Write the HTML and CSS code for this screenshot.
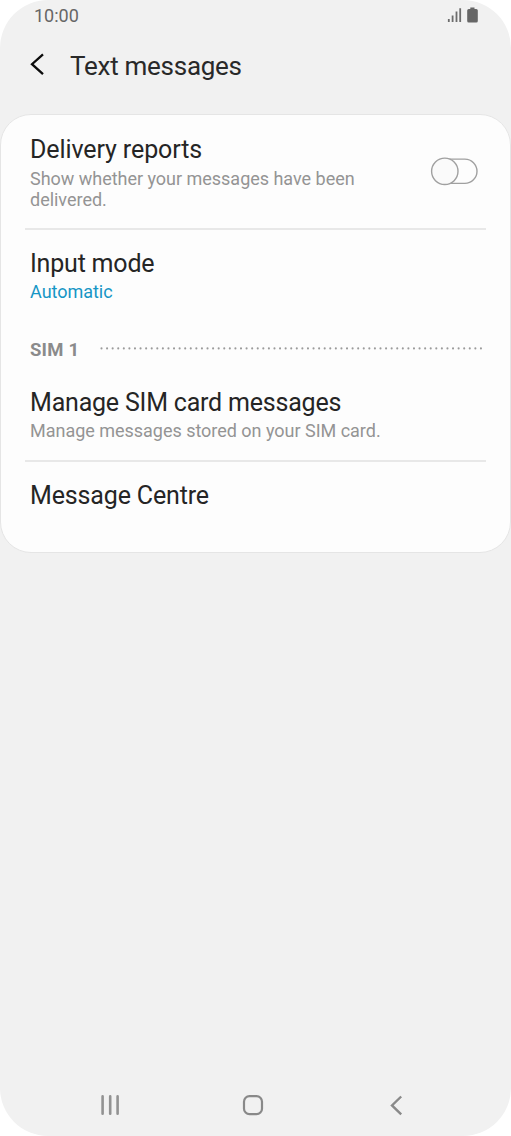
FILE: index.html
```html
<!DOCTYPE html>
<html lang="en">
<head>
<meta charset="utf-8">
<title>Text messages</title>
<link rel="stylesheet" href="styles.css">
</head>
<body>
<div class="screen">
  <div class="status">
    <span class="clock">10:00</span>
    <svg class="indicators" width="32" height="18" viewBox="0 0 32 18">
      <path d="M1.800 15V12M5.600 15V8.400M9.500 15V4.500M13.200 15V1.200" fill="none" stroke="#6c6c6c" stroke-width="1.800"/>
      <path d="M23.300 .4h4.200v1.500h1.800q1.500 0 1.500 1.500v10.700q0 1.500-1.500 1.500h-7.600q-1.500 0-1.500-1.500V3.400q0-1.500 1.500-1.500h1.600z" fill="#666"/>
    </svg>
  </div>
  <header class="header">
    <svg class="back" width="16" height="24" viewBox="0 0 16 24"><path d="M14 2.300 3 12.200l11 10" fill="none" stroke="#0c0c0c" stroke-width="2.300"/></svg>
    <h1 class="title">Text messages</h1>
  </header>
  <main class="card">
    <section class="row row-reports">
      <div class="copy">
        <h2 class="name name-reports">Delivery reports</h2>
        <p class="note">Show whether your messages have been<br>delivered.</p>
      </div>
      <svg class="toggle" width="48" height="30" viewBox="0 0 48 30">
        <rect x="8" y="3.100" width="39" height="24.300" rx="12.150" fill="#fdfdfd" stroke="#a0a0a0" stroke-width="1.400"/>
        <circle cx="14.800" cy="15.300" r="13.200" fill="#fafafa" stroke="#a0a0a0" stroke-width="1.400"/>
      </svg>
    </section>
    <section class="row row-input">
      <h2 class="name name-input">Input mode</h2>
      <p class="note note-active">Automatic</p>
    </section>
    <div class="group">
      <span class="group-label">SIM 1</span>
      <svg class="dots" width="384" height="4" viewBox="0 0 384 4"><path d="M1.500 2.400H383" stroke="#9b9b9b" stroke-width="2.100" stroke-linecap="round" stroke-dasharray="0 5.580"/></svg>
    </div>
    <section class="row row-sim">
      <h2 class="name name-sim">Manage SIM card messages</h2>
      <p class="note note-sim">Manage messages stored on your SIM card.</p>
    </section>
    <section class="row row-centre">
      <h2 class="name name-centre">Message Centre</h2>
    </section>
  </main>
  <nav class="nav">
    <svg width="22" height="22" viewBox="0 0 22 22"><path d="M3.600 2.400V19.800M11.200 2.400V19.800M18.600 2.400V19.800" stroke="#929292" stroke-width="2.600" stroke-linecap="round"/></svg>
    <svg width="22" height="22" viewBox="0 0 22 22"><rect x="2" y="2.200" width="18" height="18" rx="5.500" fill="none" stroke="#898989" stroke-width="2.200"/></svg>
    <svg width="22" height="22" viewBox="0 0 22 22"><path d="M16.200 2.500 7 11.400l9.200 8.900" fill="none" stroke="#8a8a8a" stroke-width="2.400"/></svg>
  </nav>
</div>
</body>
</html>
```
FILE: styles.css
```css
* { box-sizing: border-box; }
body {
  margin: 0;
  background: #fff;
  font-family: Roboto, sans-serif;
}
h1, h2, p { margin: 0; font-weight: 400; white-space: nowrap; }
svg { display: block; flex: none; }
.screen {
  display: flex;
  flex-direction: column;
  height: 1136px;
  background: #f1f1f1;
  border-radius: 48px;
  overflow: hidden;
}
.status {
  display: flex;
  justify-content: space-between;
  align-items: flex-start;
  height: 32px;
  padding: 5px 32px 0 34px;
}
.indicators { margin-top: 2px; }
.clock { font-size: 18px; line-height: 22px; color: #666; }
.header {
  display: flex;
  align-items: flex-start;
  height: 82px;
  padding: 18px 0 0 29px;
}
.back { margin: 2px 25px 0 0; }
.title {
  font-size: 26px;
  line-height: 32px;
  letter-spacing: -0.27px;
  color: #292929;
}
.card {
  width: 511px;
  height: 439px;
  padding: 0 24px;
  background: #fdfdfd;
  border: 1px solid #e5e5e5;
  border-radius: 31px;
}
.row { padding: 0 5px; }
.row-reports {
  display: flex;
  justify-content: space-between;
  align-items: flex-start;
  height: 115px;
  padding-top: 20px;
  padding-right: 8px;
  border-bottom: 2px solid #e8e8e8;
}
.toggle { margin-top: 21px; }
.name { font-size: 25px; line-height: 30px; letter-spacing: -0.2px; color: #252525; }
.name-reports { letter-spacing: -0.1px; }
.name-centre { letter-spacing: -0.15px; }
.note {
  margin-top: 3px;
  font-size: 18px;
  line-height: 21px;
  letter-spacing: -0.02px;
  color: #949494;
}
.note-active { margin-top: 2px; color: #1696c5; }
.note-sim { margin-top: 2px; }
.row-input { height: 109px; padding-top: 19px; }
.group {
  display: flex;
  align-items: flex-start;
  height: 49px;
  padding-left: 5px;
}
.group-label {
  width: 70px;
  margin-top: 1px;
  font-size: 18.5px;
  line-height: 21px;
  letter-spacing: 0.2px;
  font-weight: 700;
  color: #8b8b8b;
}
.dots { margin-top: 7px; }
.row-sim { height: 74px; border-bottom: 2px solid #e8e8e8; }
.row-centre { padding-top: 19px; }
.nav {
  display: flex;
  gap: 121px;
  margin-top: auto;
  padding: 0 0 20px 99px;
}
```
